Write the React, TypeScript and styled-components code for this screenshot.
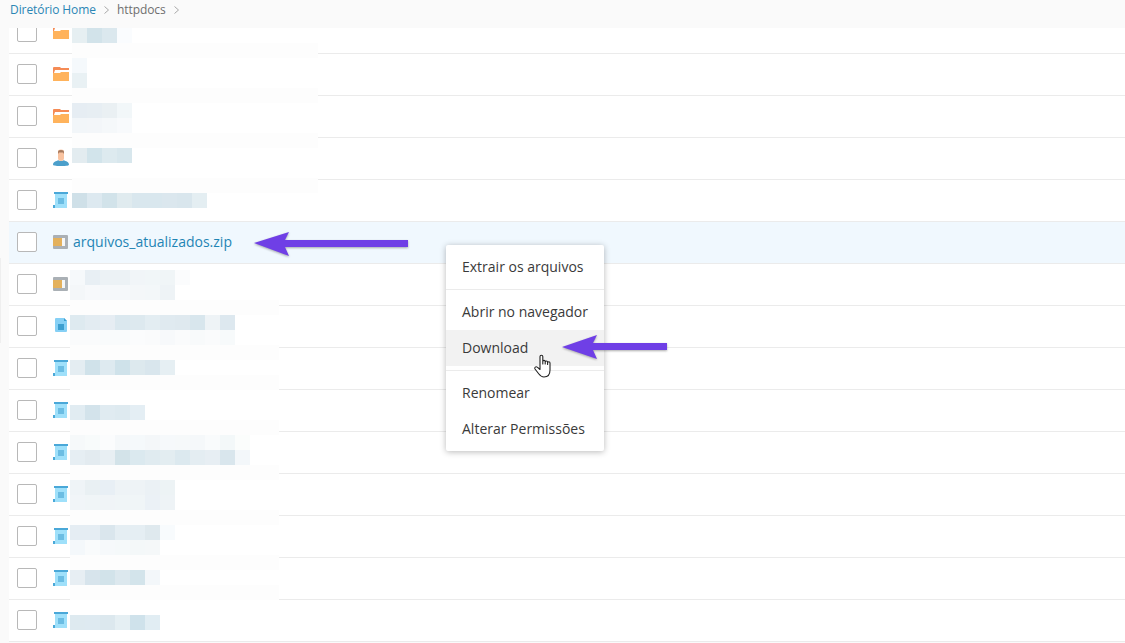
import React from 'react';
import styled, { createGlobalStyle } from 'styled-components';

const Global = createGlobalStyle`
  html, body { margin: 0; padding: 0; background: #fff; }
  body { font-family: "Open Sans", "Liberation Sans", sans-serif; }
`;

const Page = styled.div`
  position: relative;
  width: 1125px;
  height: 643px;
  overflow: hidden;
  display: flex;
  flex-direction: column;
  background: #fafafa;
`;

const Breadcrumb = styled.nav`
  height: 28px;
  flex: none;
  display: flex;
  align-items: flex-start;
  padding: 1px 0 0 10px;
  box-sizing: border-box;
  font-size: 12px;
  line-height: 18px;
  letter-spacing: -0.08px;
  color: #6f6f6f;
`;

const Crumb = styled.span<{ $link?: boolean }>`
  color: ${(p) => (p.$link ? '#2a86b5' : '#6f6f6f')};
`;

const Chevron = styled.svg`
  width: 5px;
  height: 8px;
  margin: 5px 8px 0 8px;
  flex: none;
  fill: none;
  stroke: #a8a8a8;
  stroke-width: 1;
`;

const Body = styled.div`
  flex: 1;
  min-height: 0;
  overflow: hidden;
  padding-left: 9px;
`;

const List = styled.ul`
  list-style: none;
  margin: -16px 0 0;
  padding: 0;
  background: #fff;
`;

const Row = styled.li<{ $selected?: boolean }>`
  height: 42px;
  box-sizing: border-box;
  padding: 0 0 1px 8px;
  display: flex;
  align-items: center;
  border-bottom: 1px solid #ebebeb;
  background: ${(p) => (p.$selected ? '#f0f8fe' : '#fff')};
`;

const Checkbox = styled.span`
  width: 20px;
  height: 20px;
  box-sizing: border-box;
  flex: none;
  border: 1px solid #b8b8b8;
  border-radius: 2px;
  background: #fff;
  margin-right: 16px;
`;

const IconBox = styled.svg`
  width: 16px;
  height: 20px;
  flex: none;
  margin-right: 4px;
  display: block;
`;

const FileName = styled.a`
  font-size: 14px;
  line-height: 20px;
  color: #1f85b5;
`;

const ScrollEdge = styled.i`
  position: absolute;
  left: 0;
  top: 258px;
  width: 1px;
  height: 85px;
  background: #efefef;
`;

const Mosaic = styled.div<{ $left: number; $top: number; $width: number }>`
  position: absolute;
  left: ${(p) => p.$left}px;
  top: ${(p) => p.$top}px;
  width: ${(p) => p.$width}px;
  overflow: hidden;
  background: #fff;
`;

const MosaicLine = styled.div<{ $fill: string }>`
  display: flex;
  height: 15px;
  background: ${(p) => p.$fill};
`;

const MosaicCell = styled.span<{ $color: string }>`
  width: 15px;
  height: 15px;
  flex: none;
  background: ${(p) => p.$color};
`;

const Menu = styled.ul`
  position: absolute;
  left: 446px;
  top: 245px;
  width: 158px;
  box-sizing: border-box;
  margin: 0;
  padding: 4px 0;
  list-style: none;
  background: #fff;
  border-radius: 2px;
  box-shadow: 0 1px 6px rgba(0, 0, 0, 0.28);
`;

const MenuItem = styled.li<{ $hover?: boolean }>`
  height: 36px;
  box-sizing: border-box;
  padding: 0 16px 2px;
  display: flex;
  align-items: center;
  font-size: 14px;
  color: #3a3a3a;
  white-space: nowrap;
  background: ${(p) => (p.$hover ? '#f2f2f2' : 'transparent')};
`;

const MenuDivider = styled.li`
  height: 1px;
  margin: 4px 0;
  background: #ebebeb;
`;

const ArrowSvg = styled.svg<{ $left: number; $top: number }>`
  position: absolute;
  left: ${(p) => p.$left}px;
  top: ${(p) => p.$top}px;
  overflow: visible;
  filter: drop-shadow(0 1px 1px rgba(70, 70, 70, 0.45));
`;

const Cursor = styled.svg`
  position: absolute;
  left: 534px;
  top: 354px;
  width: 19px;
  height: 24px;
  overflow: visible;
`;

const FolderIcon = () => (
  <IconBox viewBox="0 0 16 20">
    <path d="M0 4a1 1 0 0 1 1-1h6l1 1h8v6H0z" fill="#f58b55" />
    <path d="M2 6h14v3H1z" fill="#fff" />
    <path d="M0 9h7l1-1h8v9H0z" fill="#ffb35c" />
  </IconBox>
);

const UserIcon = () => (
  <IconBox viewBox="0 0 16 20">
    <path d="M5 4a3 2.4 0 0 1 6 0v6a3 3 0 0 1-6 0z" fill="#f9c3a0" />
    <path d="M5 6V4.4a3 2.4 0 0 1 6 0V6L10 4.6H6z" fill="#a67a5e" />
    <path d="M0 16.5C0 14 3 13 5.5 12.2c1.2 1.2 3.8 1.2 5 0C13 13 16 14 16 16.5c0 1-2 1.5-8 1.5s-8-.5-8-1.5z" fill="#4b9fcb" />
  </IconBox>
);

const ScriptIcon = () => (
  <IconBox viewBox="0 0 16 20">
    <rect x="2" y="3" width="12" height="15" fill="#9fe0fa" />
    <rect x="1" y="2" width="14" height="2" fill="#4aa8d8" />
    <rect x="5" y="8" width="6" height="6" fill="#6bbde3" />
    <rect x="0" y="15" width="2" height="3" fill="#4aa8d8" />
  </IconBox>
);

const ZipIcon = () => (
  <IconBox viewBox="0 0 16 20">
    <rect x="0" y="3" width="15" height="14" rx="1" fill="#aab0b5" />
    <rect x="0" y="6" width="9" height="8" fill="#e4b15c" />
    <rect x="9" y="6" width="3" height="8" fill="#f4f6f7" />
  </IconBox>
);

const DocIcon = () => (
  <IconBox viewBox="0 0 16 20">
    <path d="M3 2h8l3 3v10a1 1 0 0 1-1 1H3a1 1 0 0 1-1-1V3a1 1 0 0 1 1-1z" fill="#86d0f5" />
    <path d="M11 2l3 3h-3z" fill="#3d9fd0" />
    <rect x="5" y="8" width="6" height="6" fill="#3d9fd0" />
  </IconBox>
);

const Icons = {
  folder: FolderIcon,
  user: UserIcon,
  script: ScriptIcon,
  zip: ZipIcon,
  doc: DocIcon,
};

type Kind = keyof typeof Icons;

const rows: Kind[] = [
  'folder', 'folder', 'folder', 'user', 'script', 'zip', 'zip', 'doc',
  'script', 'script', 'script', 'script', 'script', 'script', 'script',
];

const BAND = '#fdfdfd';
const WHITE = '#ffffff';

type Line = { fill: string; cells?: string[] };
const t = (...cells: string[]): Line => ({ fill: WHITE, cells });
const band: Line = { fill: BAND };
const blank: Line = { fill: WHITE };

const upperBlur: Line[] = [
  t('#e6eff2', '#d2e3ea', '#dbe8ee', '#fafcfe'),
  band,
  t('#f5f9fc'),
  t('#e9f1f4'),
  band,
  t('#e6edf3', '#e7eef3', '#eaf0f3', '#f2f7f9'),
  t('#f2f6f9', '#f3f6f9', '#f5f8fa', '#f8fafc'),
  band,
  t('#e3ecf0', '#d2e4eb', '#ddeaef', '#d8e7ed'),
  blank,
  band,
  t('#cfe0e8', '#dde9f0', '#d2e3ea', '#e0ebef', '#d9e7ee', '#d9e7ee', '#dbe7ee', '#d9e6ed', '#e4eef2'),
];

const lowerBlur: Line[] = [
  t('#f6f9fb', '#e8eff4', '#ecf2f5', '#ecf2f5', '#f1f5f8', '#f1f6f8', '#f0f5f7', '#fbfcfd'),
  t('#f4f7f9', '#f7f9fb', '#f5f8fa', '#f5f8fa', '#f4f7f9', '#f3f7f9', '#eef3f6'),
  band,
  t('#deeaf0', '#e3ecf2', '#e6edf3', '#dbe8ef', '#dde9ef', '#e3edf2', '#e0eaf0', '#dfe9ef', '#d8e6ed', '#eef3f6', '#dde8ef'),
  t('#fafbfc', '#fafbfc', '#f9fbfc', '#f9fbfc', '#fbfcfd', '#fafbfc', '#f7f9fb', '#fafbfc', '#f8fafb', '#fafbfc', '#f7fafb'),
  band,
  t('#e4edf2', '#d0e2ea', '#deeaf0', '#cfe2ea', '#dde9ee', '#d9e6ed', '#e6eff3'),
  band,
  blank,
  t('#e1ecf2', '#d3e3eb', '#e0ebf1', '#deeaf0', '#e4eef4'),
  band,
  t('#f6f9fa', '#f8fbfb', '#fbfcfd', '#f5f8fa', '#f5f9fb', '#f4f7f9', '#f6f9fb', '#f6f9fa', '#f5f8fa', '#f9fbfc', '#f3f8f9', '#fbfdfc'),
  t('#e6eef3', '#e3ebf0', '#e8eff3', '#d3e3e9', '#dbe9ef', '#e0ebf0', '#e3edf1', '#dce9ef', '#e4edf2', '#e7eef3', '#d9e6ed', '#f3f7fa'),
  band,
  t('#eff4f7', '#e9f0f3', '#e8eff5', '#eef3f6', '#eef3f6', '#ebf1f5', '#edf3f5'),
  t('#f1f5f8', '#f0f5f7', '#f0f4f7', '#f0f5f7', '#f0f5f7', '#ebf1f6', '#eef3f6'),
  band,
  t('#e5edf3', '#e5edf3', '#dae6ed', '#e5eef3', '#e5eef3', '#dfe9ee', '#f8fbfd'),
  t('#f4f8fb', '#f9fbfc', '#f6f9fb', '#f5f9fa', '#f4f8f9', '#f5f8f9'),
  band,
  t('#e7eef3', '#d7e4ec', '#d2e3ea', '#dce8ee', '#d3e4eb', '#f3f7fa'),
  band,
  blank,
  t('#deeaf0', '#deeaf1', '#dce8ee', '#e5eff3', '#cfe2eb', '#e1edf3'),
];

const Blur = ({ lines, left, top, width }: { lines: Line[]; left: number; top: number; width: number }) => (
  <Mosaic $left={left} $top={top} $width={width}>
    {lines.map((line, i) => (
      <MosaicLine key={i} $fill={line.fill}>
        {line.cells?.map((c, j) => <MosaicCell key={j} $color={c} />)}
      </MosaicLine>
    ))}
  </Mosaic>
);

const Arrow = ({ left, top, width, height, points }: { left: number; top: number; width: number; height: number; points: string }) => (
  <ArrowSvg $left={left} $top={top} width={width} height={height} viewBox={`0 0 ${width} ${height}`}>
    <polygon points={points} fill="#6f3fe6" />
  </ArrowSvg>
);

export default function App() {
  return (
    <Page>
      <Global />
      <Breadcrumb>
        <Crumb $link>Diretório Home</Crumb>
        <Chevron viewBox="0 0 5 8"><path d="M.5.5 4.5 4 .5 7.5" /></Chevron>
        <Crumb>httpdocs</Crumb>
        <Chevron viewBox="0 0 5 8"><path d="M.5.5 4.5 4 .5 7.5" /></Chevron>
      </Breadcrumb>
      <Body>
        <List>
          {rows.map((kind, i) => {
            const Icon = Icons[kind];
            return (
              <Row key={i} $selected={i === 5}>
                <Checkbox />
                <Icon />
                {i === 5 && <FileName>arquivos_atualizados.zip</FileName>}
              </Row>
            );
          })}
        </List>
      </Body>
      <ScrollEdge />
      <Blur lines={upperBlur} left={72} top={28} width={246} />
      <Blur lines={lowerBlur} left={70} top={270} width={209} />
      <Arrow left={254} top={232} width={154} height={24} points="0,11 35,0 31,8 154,8 154,15 31,15 35,24" />
      <Menu>
        <MenuItem>Extrair os arquivos</MenuItem>
        <MenuDivider />
        <MenuItem>Abrir no navegador</MenuItem>
        <MenuItem $hover>Download</MenuItem>
        <MenuDivider />
        <MenuItem>Renomear</MenuItem>
        <MenuItem>Alterar Permissões</MenuItem>
      </Menu>
      <Arrow left={562} top={335} width={105} height={24} points="0,12 35,0 31,8 105,8 105,15 31,15 35,24" />
      <Cursor viewBox="0 0 19 24">
        <path
          d="M6 14V2.6a1.4 1.4 0 0 1 2.8 0V10V7.6a1.2 1.2 0 0 1 2.4 0V10V8.2a1.2 1.2 0 0 1 2.4 0v2.3V9a1.2 1.2 0 0 1 2.4 0v7c0 4-2 7-6 7-3 0-4-1.5-5.5-3.5L1 15c-1-1.5 1-3 2.3-1.8L6 15.5z"
          fill="#fff"
          stroke="#222"
          strokeWidth="1.1"
          strokeLinejoin="round"
        />
      </Cursor>
    </Page>
  );
}
